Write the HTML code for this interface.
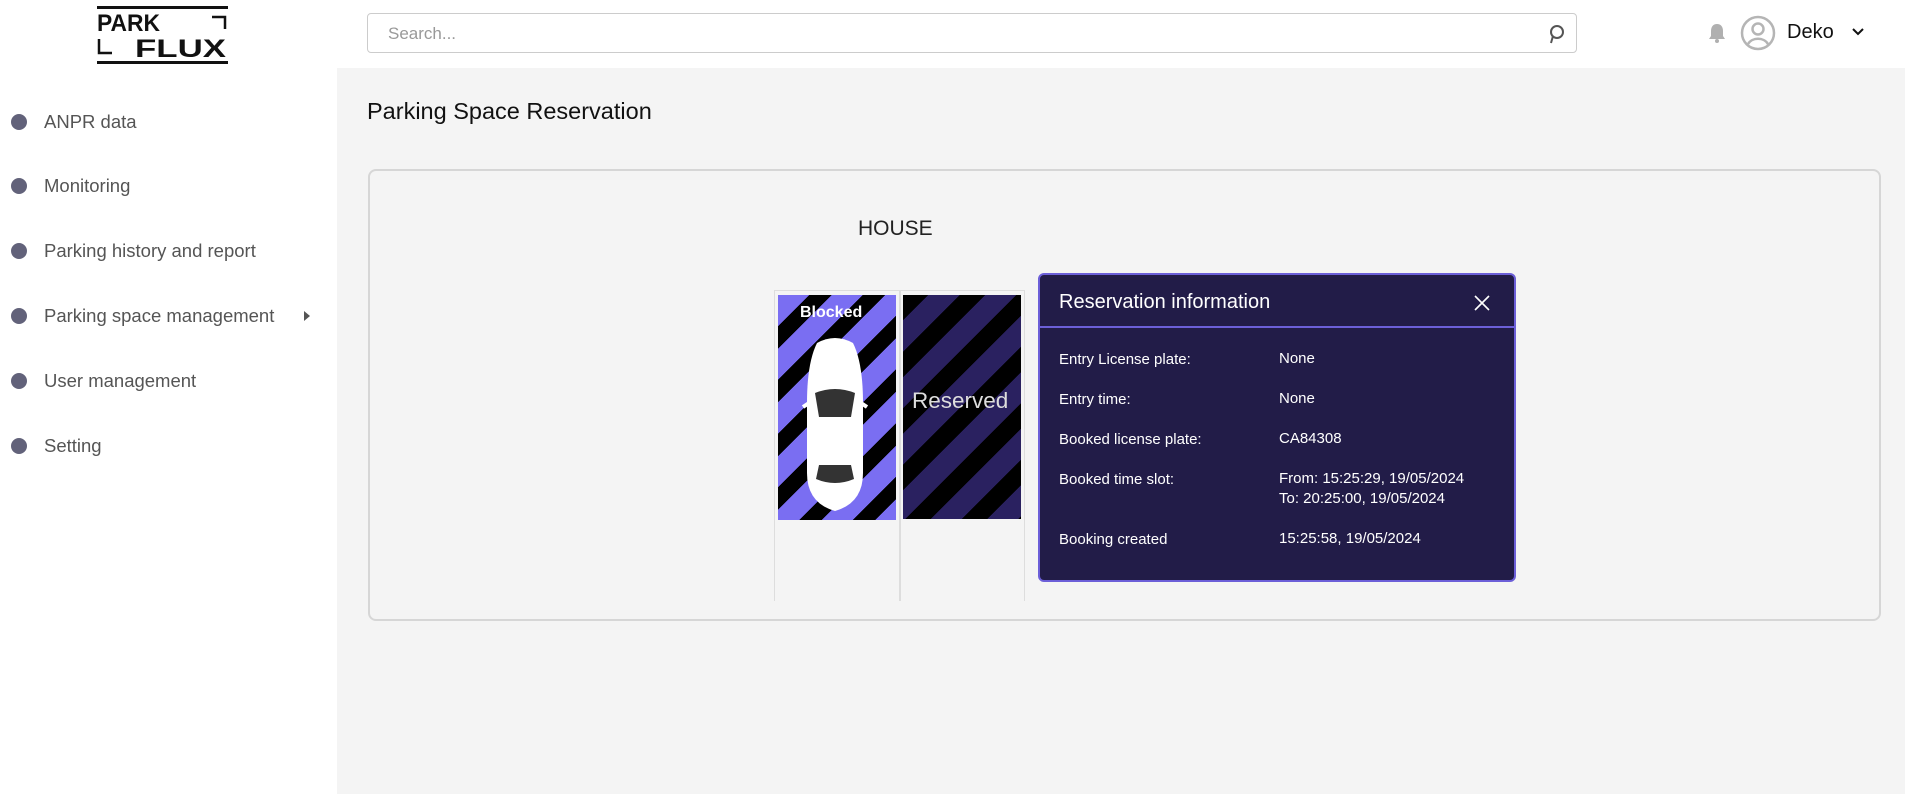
<!DOCTYPE html>
<html><head><meta charset="utf-8"><style>
*{margin:0;padding:0;box-sizing:border-box}
body{width:1905px;height:794px;overflow:hidden;background:#f4f4f4;font-family:"Liberation Sans",sans-serif;position:relative}
.side{position:absolute;left:0;top:0;width:337px;height:794px;background:#fff}
.top{position:absolute;left:337px;top:0;width:1568px;height:68px;background:#fff}
.nav{position:absolute;left:0;font-size:18.5px;color:#555}
.nav .d{position:absolute;left:11px;top:-8px;width:16px;height:16px;border-radius:50%;background:#62627a}
.nav span{position:absolute;left:44px;top:-11px;white-space:nowrap}
.search{position:absolute;left:367px;top:13px;width:1210px;height:40px;border:1px solid #ccc;border-radius:4px;background:#fff}
.search span{position:absolute;left:20px;top:10px;font-size:17px;color:#999}
.card{position:absolute;left:368px;top:169px;width:1513px;height:452px;border:2px solid #d6d6d6;border-radius:8px;background:#f4f4f4}
.pop{position:absolute;left:1038px;top:273px;width:478px;height:309px;background:#221c48;border:2px solid #6c5fd8;border-radius:6px;color:#fff}
.pop .h{height:53px;border-bottom:2px solid #6c5fd8;font-size:20px;padding:16px 0 0 19px}
.r{position:absolute;left:19px;font-size:15px}
.v{position:absolute;left:239px;font-size:15px;line-height:20px}
</style></head><body>
<div class="side">
<svg style="position:absolute;left:96px;top:5px" width="134" height="60">
<rect x="1" y="1" width="131" height="3" fill="#111"/><rect x="1" y="56" width="131" height="3" fill="#111"/>
<text x="1" y="26" font-family="Liberation Sans" font-size="24" font-weight="bold" fill="#111" textLength="63" lengthAdjust="spacingAndGlyphs">PARK</text>
<text x="39" y="52" font-family="Liberation Sans" font-size="25" font-weight="bold" fill="#111" textLength="91" lengthAdjust="spacingAndGlyphs">FLUX</text>
<path d="M116 12h13v12" stroke="#111" stroke-width="2.5" fill="none"/>
<path d="M3 34v14h13" stroke="#111" stroke-width="2.5" fill="none"/>
</svg>
<div class="nav" style="top:122px"><div class="d"></div><span>ANPR data</span></div>
<div class="nav" style="top:186px"><div class="d"></div><span>Monitoring</span></div>
<div class="nav" style="top:251px"><div class="d"></div><span>Parking history and report</span></div>
<div class="nav" style="top:316px"><div class="d"></div><span>Parking space management</span></div>
<div style="position:absolute;left:304px;top:311px;border-left:6px solid #555;border-top:5px solid transparent;border-bottom:5px solid transparent"></div>
<div class="nav" style="top:381px"><div class="d"></div><span>User management</span></div>
<div class="nav" style="top:446px"><div class="d"></div><span>Setting</span></div>
</div>
<div class="top"></div>
<div class="search"><span>Search...</span>
<svg style="position:absolute;right:10px;top:9px" width="20" height="22"><circle cx="11" cy="9" r="6" stroke="#555" stroke-width="2" fill="none"/><path d="M7 13L5 20" stroke="#555" stroke-width="2"/></svg></div>
<svg style="position:absolute;left:1707px;top:22px" width="20" height="22"><path d="M10 2c-4 0-6 3-6 7v5l-2 3h16l-2-3V9c0-4-2-7-6-7z" fill="#b0b0b0"/><circle cx="10" cy="19" r="2" fill="#b0b0b0"/></svg>
<svg style="position:absolute;left:1740px;top:15px" width="36" height="36"><circle cx="18" cy="18" r="16" stroke="#b5b5b5" stroke-width="2.5" fill="none"/><circle cx="18" cy="14" r="5.5" stroke="#b5b5b5" stroke-width="2.5" fill="none"/><path d="M8 29c4-7 16-7 20 0" stroke="#b5b5b5" stroke-width="2.5" fill="none"/></svg>
<div style="position:absolute;left:1787px;top:21px;font-size:20px;color:#111">Deko</div>
<svg style="position:absolute;left:1851px;top:27px" width="14" height="10"><path d="M2 2l5 5 5-5" stroke="#111" stroke-width="2" fill="none"/></svg>
<div style="position:absolute;left:367px;top:98px;font-size:23.5px;color:#111">Parking Space Reservation</div>
<div class="card"></div>
<div style="position:absolute;left:858px;top:217px;font-size:21px;color:#222">HOUSE</div>
<div style="position:absolute;left:774px;top:290px;width:251px;height:311px;border-left:1.5px solid #ddd;border-right:1.5px solid #ddd;border-top:1.5px solid #ddd"></div>
<div style="position:absolute;left:899px;top:290px;width:1.5px;height:311px;background:#ddd"></div>
<div style="position:absolute;left:778px;top:295px;width:118px;height:225px;background:repeating-linear-gradient(135deg,#7a6ef2 0 22px,#000 22px 38px)"></div>
<div style="position:absolute;left:800px;top:304px;font-size:16px;font-weight:bold;color:#fff">Blocked</div>
<svg style="position:absolute;left:795px;top:335px" width="80" height="180">
<path d="M22 8q18-10 36 0q10 20 10 60v70q0 30-28 38q-28-8-28-38V68q0-40 10-60z" fill="#fff"/>
<path d="M20 58q20-8 40 0l-4 24h-32z" fill="#333"/><path d="M24 130h32l3 14q-19 8-38 0z" fill="#333"/>
<path d="M8 72l6-4M72 72l-6-4" stroke="#fff" stroke-width="4"/></svg>
<div style="position:absolute;left:903px;top:295px;width:118px;height:224px;background:repeating-linear-gradient(135deg,#000 0 18px,#2a2160 18px 40px)"></div>
<div style="position:absolute;left:912px;top:388px;font-size:22.5px;color:#ddd">Reserved</div>
<div class="pop"><div class="h">Reservation information</div>
<svg style="position:absolute;left:434px;top:20px" width="16" height="16"><path d="M1 1l14 14M15 1L1 15" stroke="#fff" stroke-width="1.6"/></svg>
<div class="r" style="top:76px">Entry License plate:</div><div class="v" style="top:74px">None</div>
<div class="r" style="top:116px">Entry time:</div><div class="v" style="top:114px">None</div>
<div class="r" style="top:156px">Booked license plate:</div><div class="v" style="top:154px">CA84308</div>
<div class="r" style="top:196px">Booked time slot:</div><div class="v" style="top:194px">From: 15:25:29, 19/05/2024<br>To: 20:25:00, 19/05/2024</div>
<div class="r" style="top:256px">Booking created</div><div class="v" style="top:254px">15:25:58, 19/05/2024</div>
</div>
</body></html>
